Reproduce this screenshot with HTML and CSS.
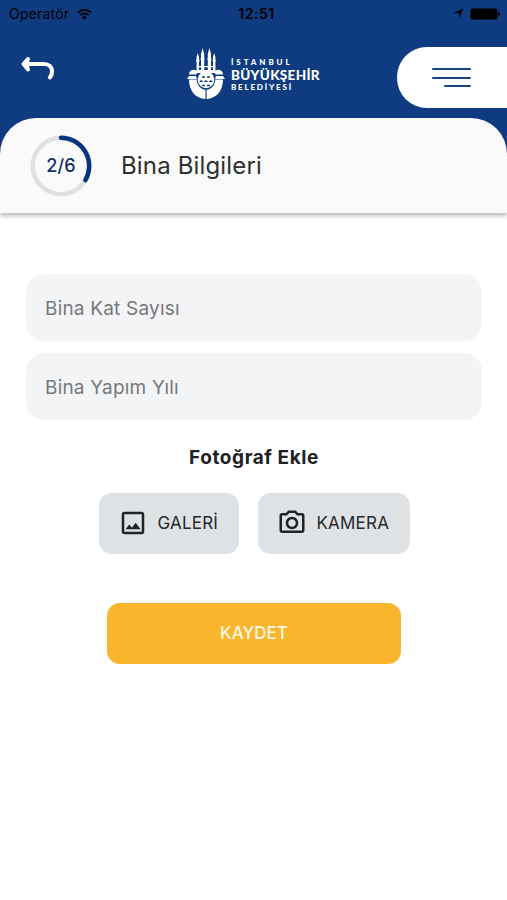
FILE: index.html
```html
<!DOCTYPE html>
<html lang="tr">
<head>
    <meta charset="UTF-8">
    <meta name="viewport" content="width=device-width, initial-scale=1.0">
    <title>Bina Bilgileri</title>
    <link rel="stylesheet" href="styles.css">
</head>
<body>
    <header>
        <div class="status-bar">
            <div class="carrier">
                <span>Operatör</span>
                <svg width="15" height="12" viewBox="0 0 15 12" fill="none" stroke="#000" stroke-width="1.8">
                    <path d="M1 4.6a9.3 9.3 0 0 1 13 0"/>
                    <path d="M3.4 7.2a5.8 5.8 0 0 1 8.2 0"/>
                    <path d="M7.5 11.8L5.1 9.2a3.4 3.4 0 0 1 4.8 0z" fill="#000" stroke="none"/>
                </svg>
            </div>
            <div class="clock">12:51</div>
            <div class="battery">
                <svg width="11" height="11" viewBox="0 0 11 11"><path d="M10.5 0.5L6.2 10.2V5.3L0.3 5.1z"/></svg>
                <svg width="30" height="12" viewBox="0 0 30 12"><rect x="0.5" y="0.5" width="27" height="11" rx="1.5"/><path d="M28.3 4a2 2 0 0 1 0 4z"/></svg>
            </div>
        </div>
        <div class="nav-bar">
            <button class="back" aria-label="Geri">
                <svg width="36" height="26" viewBox="0 0 36 26" fill="none" stroke="#fff" stroke-width="4" stroke-linecap="round" stroke-linejoin="round">
                    <path d="M8 4L3.500 9 8 14.500M4 9H24c5 0 8 3 8 7.500 0 2.500-.6 4.500-2.200 6"/>
                    <path d="M3.500 9L8 4V14.500z" fill="#fff" stroke-width="2.500"/>
                </svg>
            </button>
            <div class="logo">
                <svg width="38" height="52" viewBox="0 0 38 52">
                    <g fill="#fff">
                        <path d="M9.600 23V9l1.200-4L12 9v14zM14 23V6l1.600-6 1.600 6v17zM20.800 23V6l1.600-6L24 6v17zM26 23V9l1.200-4 1.200 4v14z"/>
                        <path d="M9 12h3.600v1.300H9zM13.500 10.500h4.200v1.300h-4.200zM20.300 10.500h4.200v1.300h-4.200zM25.400 12H29v1.300h-3.600z"/>
                        <path d="M9.600 18h18.800v1.200H9.600zM9.600 22h18.800v3H9.600z"/>
                        <path d="M2 26.500a4.800 4.800 0 0 1 8.500-3l-1 3zM36 26.500a4.800 4.800 0 0 0-8.500-3l1 3z"/>
                        <path d="M0 31l2-3h7l1 3zM38 31l-2-3h-7l-1 3z"/>
                        <path d="M2 31.500h7.600c.6 6 3.800 9.600 8.800 10.300V51C8.800 50.500 2 43 2 31.500zM36 31.500h-7.600c-.6 6-3.800 9.600-8.800 10.300V51C29.200 50.500 36 43 36 31.500z"/>
                        <circle cx="19" cy="31.800" r="8.400"/>
                    </g>
                    <g fill="#0f3b80">
                        <path d="M14.700 29.800a1.800 1.800 0 0 1 3.600 0zM19.700 29.800a1.800 1.800 0 0 1 3.600 0z"/>
                        <path d="M12.400 34a1.800 1.800 0 0 1 3.600 0zM17.200 34a1.800 1.800 0 0 1 3.600 0zM22 34a1.800 1.800 0 0 1 3.600 0z"/>
                        <path d="M14.700 38.200a1.800 1.800 0 0 1 3.600 0zM19.700 38.200a1.800 1.800 0 0 1 3.600 0z"/>
                    </g>
                </svg>
                <div class="logo-text">
                    <span class="logo-top">İSTANBUL</span>
                    <span class="logo-main">BÜYÜKŞEHİR</span>
                    <span class="logo-bottom">BELEDİYESİ</span>
                </div>
            </div>
            <button class="menu" aria-label="Menü">
                <span></span>
                <span></span>
                <span class="short"></span>
            </button>
        </div>
    </header>

    <div class="step-card">
        <div class="progress">
            <svg width="62" height="62" viewBox="0 0 62 62" fill="none" stroke-width="4.500">
                <circle cx="31" cy="31" r="28.200" stroke="#e0e0e0"/>
                <path d="M31 2.800A28.200 28.200 0 0 1 55.400 45.100" stroke="#05357f" stroke-linecap="round"/>
            </svg>
            <span>2/6</span>
        </div>
        <h1>Bina Bilgileri</h1>
    </div>

    <form>
        <input type="text" name="kat_sayisi" placeholder="Bina Kat Sayısı">
        <input type="text" name="yapim_yili" placeholder="Bina Yapım Yılı">

        <h2>Fotoğraf Ekle</h2>
        <div class="photo-buttons">
            <button type="button" class="photo gallery">
                <svg width="30" height="30" viewBox="0 0 24 24" fill="#202225">
                    <path d="M19 5v14H5V5h14m0-2H5c-1.100 0-2 .9-2 2v14c0 1.100.9 2 2 2h14c1.100 0 2-.9 2-2V5c0-1.100-.9-2-2-2z"/>
                    <path d="M14.140 11.860l-3 3.870L9 13.140 6 17h12l-3.860-5.140z"/>
                </svg>
                <span>GALERİ</span>
            </button>
            <button type="button" class="photo camera">
                <svg width="30" height="30" viewBox="0 0 24 24" fill="#202225">
                    <path d="M14.120 4l1.830 2H20v12H4V6h4.050l1.830-2h4.240M15 2H9L7.170 4H4c-1.100 0-2 .9-2 2v12c0 1.100.9 2 2 2h16c1.100 0 2-.9 2-2V6c0-1.100-.9-2-2-2h-3.170L15 2z"/>
                    <path d="M12 9c1.650 0 3 1.350 3 3s-1.350 3-3 3-3-1.350-3-3 1.350-3 3-3m0-2c-2.760 0-5 2.240-5 5s2.240 5 5 5 5-2.240 5-5-2.240-5-5-5z"/>
                </svg>
                <span>KAMERA</span>
            </button>
        </div>

        <button type="button" class="save">KAYDET</button>
    </form>
</body>
</html>
```
FILE: styles.css
```css
* {
    box-sizing: border-box;
}

body {
    font-family: Inter, "Liberation Sans", sans-serif;
    background-color: #fff;
    margin: 0;
}

button {
    font-family: inherit;
    border: none;
    padding: 0;
    cursor: pointer;
}

svg {
    display: block;
    flex-shrink: 0;
}

header {
    height: 158px;
    background-color: #0f3b80;
}

.status-bar {
    display: grid;
    grid-template-columns: 1fr auto 1fr;
    align-items: center;
    height: 27px;
    padding: 0 7px 0 9px;
    font-size: 14px;
    color: #000;
}

.carrier {
    display: flex;
    align-items: center;
    gap: 8px;
    letter-spacing: 0.2px;
}

.clock {
    font-weight: 600;
    letter-spacing: 0.5px;
    padding-left: 4px;
}

.battery {
    display: flex;
    align-items: center;
    justify-content: flex-end;
    gap: 6px;
}

.nav-bar {
    display: grid;
    grid-template-columns: 187px 1fr 110px;
    margin-top: 20px;
    height: 61px;
}

.back {
    justify-self: start;
    align-self: start;
    margin: 8px 0 0 20px;
    background: none;
}

.logo {
    display: flex;
    align-items: flex-start;
    gap: 6px;
    padding-top: 1px;
}

.logo-text {
    display: flex;
    flex-direction: column;
    padding-top: 10px;
    font-family: Lato, sans-serif;
    font-weight: 900;
    color: #fff;
    white-space: nowrap;
}

.logo-top {
    font-size: 8px;
    line-height: 9px;
    letter-spacing: 2.9px;
}

.logo-main {
    font-size: 13.500px;
    line-height: 16px;
    letter-spacing: 0.3px;
}

.logo-bottom {
    font-size: 8px;
    line-height: 9px;
    letter-spacing: 1.8px;
}

.menu {
    display: flex;
    flex-direction: column;
    align-items: flex-end;
    gap: 6.500px;
    padding: 21px 36px 0 0;
    background-color: #fff;
    border-radius: 30px 0 0 30px;
}

.menu span {
    width: 39px;
    height: 2px;
    border-radius: 2px;
    background-color: #164382;
}

.menu .short {
    width: 27px;
}

.step-card {
    display: flex;
    align-items: center;
    gap: 29px;
    height: 95px;
    margin-top: -40px;
    padding-left: 30px;
    background-color: #fafafa;
    border-radius: 36px 36px 0 0;
    box-shadow: 0 3px 4px rgba(0, 0, 0, 0.26);
}

.progress {
    display: grid;
    place-items: center;
}

.progress > * {
    grid-area: 1 / 1;
}

.progress span {
    font-size: 18px;
    font-weight: 500;
    letter-spacing: 0.2px;
    color: #152e66;
}

h1 {
    margin: 0;
    font-size: 24px;
    font-weight: 400;
    letter-spacing: 0.15px;
    color: #303030;
}

form {
    display: flex;
    flex-direction: column;
    align-items: center;
    padding: 61px 25px 0 26px;
}

input {
    width: 100%;
    height: 67px;
    margin-bottom: 12px;
    padding: 2px 19px 0;
    border: none;
    border-radius: 18px;
    background-color: #f3f4f6;
    font-family: inherit;
    font-size: 19px;
    letter-spacing: 0.2px;
}

input::placeholder {
    color: #77787a;
    opacity: 1;
}

h2 {
    margin: 13px 0 23px;
    font-size: 19px;
    line-height: 25px;
    font-weight: 700;
    letter-spacing: 0.6px;
    color: #202124;
}

.photo-buttons {
    display: flex;
    gap: 19px;
}

.photo {
    display: flex;
    align-items: center;
    gap: 10px;
    height: 61px;
    padding: 0 0 1px 19px;
    border-radius: 13px;
    background-color: #dee2e5;
    font-size: 17px;
    letter-spacing: 0.2px;
    color: #26282b;
}

.gallery {
    width: 140px;
}

.camera {
    width: 152px;
}

.save {
    width: 294px;
    height: 61px;
    margin-top: 49px;
    padding-bottom: 1px;
    border-radius: 13px;
    background-color: #f9b52c;
    font-size: 17px;
    font-weight: 500;
    color: #fff8e6;
}
```
